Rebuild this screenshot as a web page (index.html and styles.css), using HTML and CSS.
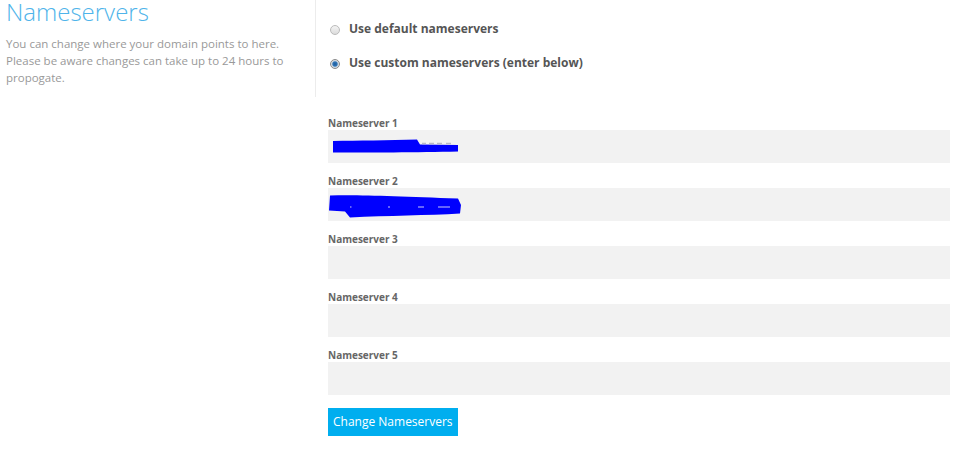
FILE: index.html
```html
<!DOCTYPE html>
<html>
<head>
<meta charset="utf-8">
<link rel="stylesheet" href="styles.css">
</head>
<body>
<div class="page">
  <div class="aside">
    <h1 class="title">Nameservers</h1>
    <p class="desc">You can change where your domain points to here. Please be aware changes can take up to 24 hours to propogate.</p>
  </div>
  <div class="main">
    <div class="radios">
      <label class="radio"><span class="dot"></span>Use default nameservers</label>
      <label class="radio"><span class="dot checked"></span>Use custom nameservers (enter below)</label>
    </div>
    <div class="fields">
      <div class="field">
        <div class="label">Nameserver 1</div>
        <div class="box">
          <svg class="scribble" width="140" height="34" viewBox="0 0 140 34">
            <path d="M5 11 C30 10.5 60 10.5 89 9.5 L92 14.5 L130 15 L130 21.5 C90 22.5 40 22.5 5 22.5 Z" fill="#0000fe"/>
            <path d="M94 13.5h4M101 13.5h5M109 13.5h5M118 13.5h5" stroke="#b8b8c8" stroke-width="1.5"/>
          </svg>
        </div>
      </div>
      <div class="field">
        <div class="label">Nameserver 2</div>
        <div class="box">
          <svg class="scribble" width="140" height="34" viewBox="0 0 140 34">
            <path d="M2 7.5 C30 6.5 70 8.5 130 10.5 L133 17 L132 25.5 C100 27.5 60 27.5 22 29.5 L17 23.5 L1 22.5 Z" fill="#0000fe"/>
            <path d="M22 19h1.5M60 19h2M90 19h6M110 19h12" stroke="#c8c8f8" stroke-width="1"/>
          </svg>
        </div>
      </div>
      <div class="field">
        <div class="label">Nameserver 3</div>
        <div class="box"></div>
      </div>
      <div class="field">
        <div class="label">Nameserver 4</div>
        <div class="box"></div>
      </div>
      <div class="field">
        <div class="label">Nameserver 5</div>
        <div class="box"></div>
      </div>
    </div>
    <button class="btn">Change Nameservers</button>
  </div>
</div>
</body>
</html>
```
FILE: styles.css
```css
html, body {
  margin: 0;
  padding: 0;
  background: #fff;
}
body {
  font-family: "Open Sans", "Liberation Sans", sans-serif;
}
.page {
  display: flex;
  align-items: flex-start;
  width: 960px;
}
.aside {
  width: 309px;
  height: 97px;
  padding-left: 6px;
  border-right: 1px solid #ececec;
}
.title {
  margin: 0;
  font-weight: 300;
  font-size: 24px;
  line-height: 24px;
  color: #4fb4ea;
}
.desc {
  margin: 11px 0 0;
  font-size: 11.5px;
  line-height: 17px;
  color: #999;
  width: 295px;
}
.main {
  flex: 1;
  padding: 11px 10px 0 12px;
}
.radios {
  display: flex;
  flex-direction: column;
}
.radio {
  display: flex;
  align-items: center;
  height: 34px;
  font-size: 12px;
  font-weight: 700;
  color: #555;
}
.dot {
  width: 8px;
  height: 8px;
  border: 1px solid #bbb;
  border-radius: 50%;
  background: linear-gradient(#f4f4f4, #dcdcdc);
  margin: 4px 9px 0 2px;
  box-sizing: content-box;
}
.dot.checked {
  border-color: #8a8a8a;
  background: radial-gradient(circle, #1d5a9a 0, #2f75b8 2.2px, #cfd7df 3.2px, #e8e8e8 5px);
}
.fields {
  margin-top: 37px;
}
.field {
  margin-bottom: 11px;
}
.label {
  font-size: 10px;
  font-weight: 700;
  line-height: 14px;
  color: #666;
}
.box {
  height: 33px;
  background: #f2f2f2;
  position: relative;
}
.scribble {
  position: absolute;
  left: 0;
  top: 0;
}
.btn {
  margin-top: 2px;
  height: 28px;
  padding: 0 5px;
  border: 0;
  background: #00aeef;
  color: #fff;
  font-family: "Open Sans", "Liberation Sans", sans-serif;
  font-size: 12px;
  line-height: 28px;
}
```
